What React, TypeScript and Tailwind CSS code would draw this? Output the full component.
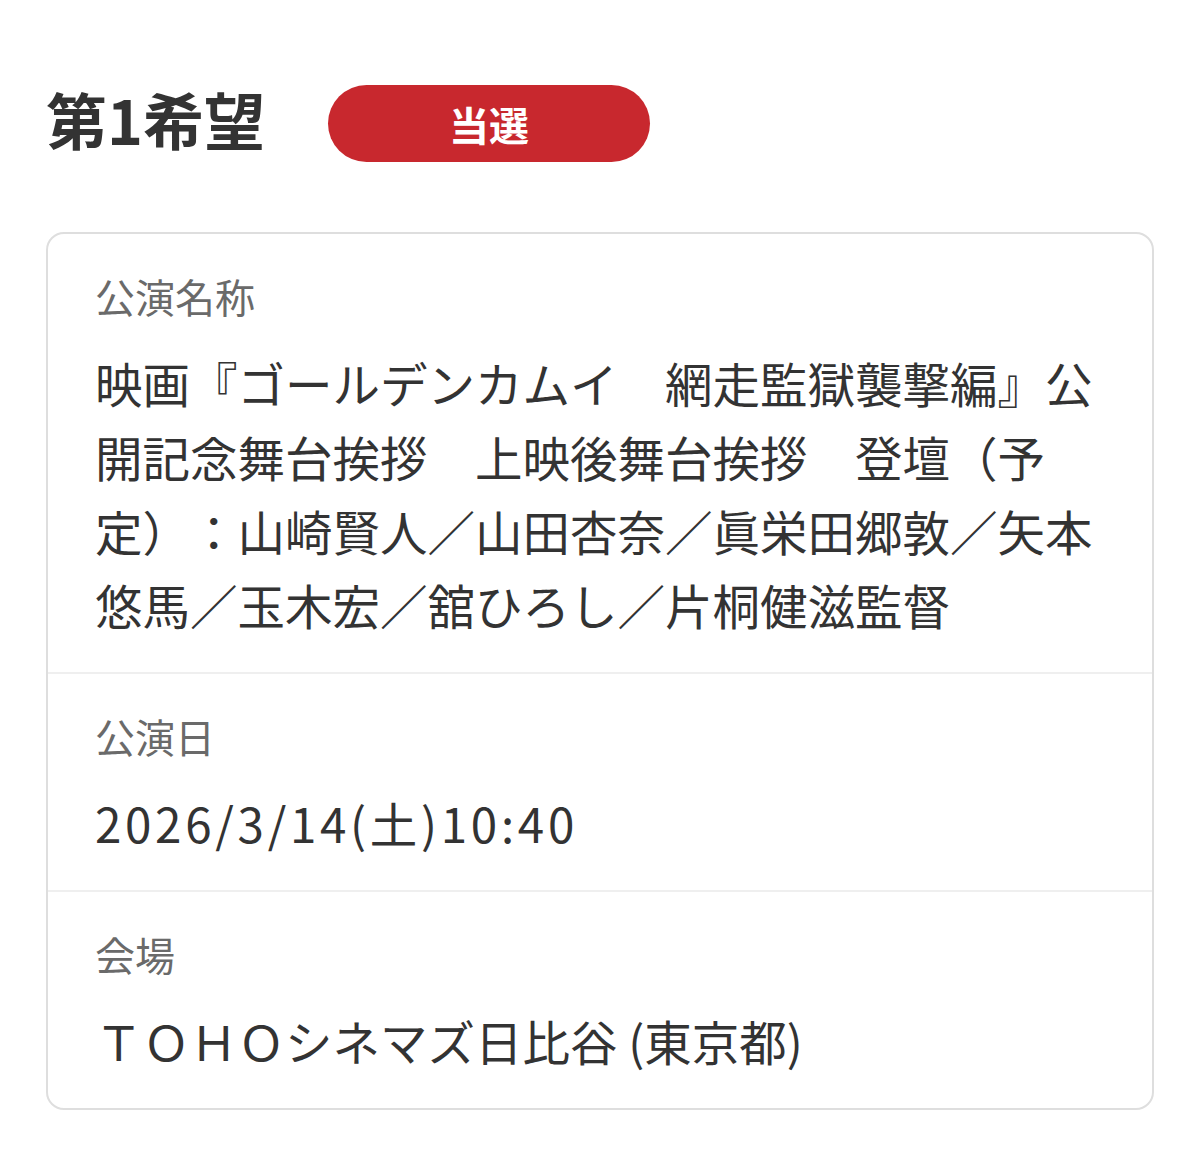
import React from "react";

const jp = "font-['Noto_Sans_CJK_JP','Noto_Sans',sans-serif]";

type Row = { label: string; value: React.ReactNode; tight?: boolean };

const rows: Row[] = [
  {
    label: "公演名称",
    value:
      "映画『ゴールデンカムイ　網走監獄襲撃編』公開記念舞台挨拶　上映後舞台挨拶　登壇（予定）：山崎賢人／山田杏奈／眞栄田郷敦／矢本悠馬／玉木宏／舘ひろし／片桐健滋監督",
  },
  { label: "公演日", value: "2026/3/14(土)10:40", tight: true },
  { label: "会場", value: "ＴＯＨＯシネマズ日比谷 (東京都)" },
];

function InfoRow({ row, first }: { row: Row; first: boolean }) {
  return (
    <div
      className={`px-[47px] pt-[34px] pb-[30px] ${
        first ? "" : "border-t-2 border-[#efefef]"
      }`}
    >
      <div className="text-[40px] leading-[56px] text-[#6a6a6a]">{row.label}</div>
      <div
        className={`mt-[22px] text-[47.5px] leading-[74px] text-[#333333] [text-spacing-trim:space-all] ${
          row.tight ? "tracking-[3.7px]" : ""
        }`}
      >
        {row.value}
      </div>
    </div>
  );
}

export default function App() {
  return (
    <div className={`min-h-[1176px] bg-white px-[46px] pt-[85px] pb-[66px] ${jp}`}>
      <div className="flex items-center gap-[63px]">
        <h1 className="pb-[10px] text-[61px] font-bold leading-none text-[#333333]">第1希望</h1>
        <div className="flex h-[77px] w-[322px] items-center justify-center rounded-full bg-[#c8282e]">
          <span className="text-[40px] font-bold leading-none text-white">当選</span>
        </div>
      </div>

      <div className="mt-[70px] overflow-hidden rounded-[18px] border-2 border-[#dedede] bg-white">
        {rows.map((r, i) => (
          <InfoRow key={r.label} row={r} first={i === 0} />
        ))}
      </div>
    </div>
  );
}
